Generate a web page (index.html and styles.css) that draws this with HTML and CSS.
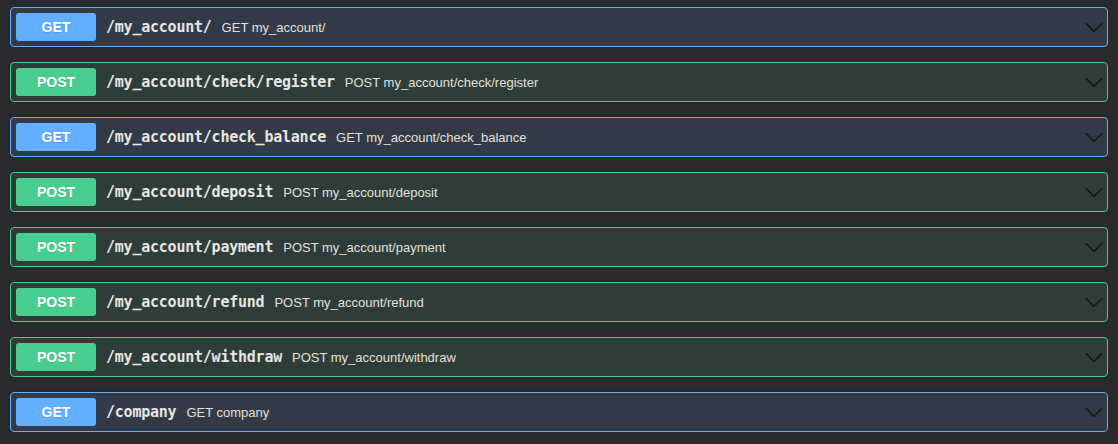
FILE: index.html
```html
<!DOCTYPE html>
<html>
<head>
<meta charset="utf-8">
<link rel="stylesheet" href="styles.css">
</head>
<body>
<div class="ops">
  <div class="opblock get">
    <span class="method">GET</span>
    <span class="path">/my_account/</span>
    <span class="desc">GET my_account/</span>
    <svg class="arrow" viewBox="0 0 20 20" width="20" height="20"><path d="M17.418 6.109c.272-.268.709-.268.979 0s.271.701 0 .969l-7.908 7.83c-.27.268-.707.268-.979 0l-7.908-7.830c-.27-.268-.27-.701 0-.969.271-.268.709-.268.979 0L10 13.25l7.418-7.141z"/></svg>
  </div>
  <div class="opblock post">
    <span class="method">POST</span>
    <span class="path">/my_account/check/register</span>
    <span class="desc">POST my_account/check/register</span>
    <svg class="arrow" viewBox="0 0 20 20" width="20" height="20"><path d="M17.418 6.109c.272-.268.709-.268.979 0s.271.701 0 .969l-7.908 7.83c-.27.268-.707.268-.979 0l-7.908-7.83c-.27-.268-.27-.701 0-.969.271-.268.709-.268.979 0L10 13.25l7.418-7.141z"/></svg>
  </div>
  <div class="opblock get">
    <span class="method">GET</span>
    <span class="path">/my_account/check_balance</span>
    <span class="desc">GET my_account/check_balance</span>
    <svg class="arrow" viewBox="0 0 20 20" width="20" height="20"><path d="M17.418 6.109c.272-.268.709-.268.979 0s.271.701 0 .969l-7.908 7.83c-.27.268-.707.268-.979 0l-7.908-7.83c-.27-.268-.27-.701 0-.969.271-.268.709-.268.979 0L10 13.25l7.418-7.141z"/></svg>
  </div>
  <div class="opblock post">
    <span class="method">POST</span>
    <span class="path">/my_account/deposit</span>
    <span class="desc">POST my_account/deposit</span>
    <svg class="arrow" viewBox="0 0 20 20" width="20" height="20"><path d="M17.418 6.109c.272-.268.709-.268.979 0s.271.701 0 .969l-7.908 7.83c-.27.268-.707.268-.979 0l-7.908-7.83c-.27-.268-.27-.701 0-.969.271-.268.709-.268.979 0L10 13.25l7.418-7.141z"/></svg>
  </div>
  <div class="opblock post">
    <span class="method">POST</span>
    <span class="path">/my_account/payment</span>
    <span class="desc">POST my_account/payment</span>
    <svg class="arrow" viewBox="0 0 20 20" width="20" height="20"><path d="M17.418 6.109c.272-.268.709-.268.979 0s.271.701 0 .969l-7.908 7.83c-.27.268-.707.268-.979 0l-7.908-7.83c-.27-.268-.27-.701 0-.969.271-.268.709-.268.979 0L10 13.25l7.418-7.141z"/></svg>
  </div>
  <div class="opblock post">
    <span class="method">POST</span>
    <span class="path">/my_account/refund</span>
    <span class="desc">POST my_account/refund</span>
    <svg class="arrow" viewBox="0 0 20 20" width="20" height="20"><path d="M17.418 6.109c.272-.268.709-.268.979 0s.271.701 0 .969l-7.908 7.83c-.27.268-.707.268-.979 0l-7.908-7.83c-.27-.268-.27-.701 0-.969.271-.268.709-.268.979 0L10 13.25l7.418-7.141z"/></svg>
  </div>
  <div class="opblock post">
    <span class="method">POST</span>
    <span class="path">/my_account/withdraw</span>
    <span class="desc">POST my_account/withdraw</span>
    <svg class="arrow" viewBox="0 0 20 20" width="20" height="20"><path d="M17.418 6.109c.272-.268.709-.268.979 0s.271.701 0 .969l-7.908 7.83c-.27.268-.707.268-.979 0l-7.908-7.83c-.27-.268-.27-.701 0-.969.271-.268.709-.268.979 0L10 13.25l7.418-7.141z"/></svg>
  </div>
  <div class="opblock get">
    <span class="method">GET</span>
    <span class="path">/company</span>
    <span class="desc">GET company</span>
    <svg class="arrow" viewBox="0 0 20 20" width="20" height="20"><path d="M17.418 6.109c.272-.268.709-.268.979 0s.271.701 0 .969l-7.908 7.83c-.27.268-.707.268-.979 0l-7.908-7.83c-.27-.268-.27-.701 0-.969.271-.268.709-.268.979 0L10 13.25l7.418-7.141z"/></svg>
  </div>
</div>
</body>
</html>
```

FILE: styles.css
```css
html, body {
  margin: 0;
  padding: 0;
  background: #292a2d;
}

.ops {
  display: flex;
  flex-direction: column;
  gap: 15px;
  padding: 7px 10px 0 10px;
}

.opblock {
  display: flex;
  align-items: center;
  height: 40px;
  box-sizing: border-box;
  padding: 0 3px 0 5px;
  border: 1px solid;
  border-radius: 4px;
  box-shadow: 0 0 3px rgba(0, 0, 0, 0.19);
}

.opblock.get {
  background: #333a47;
  border-color: #61affe;
}

.opblock.post {
  background: #2e3d39;
  border-color: #49cc90;
}

.method {
  flex: none;
  width: 80px;
  height: 28px;
  line-height: 28px;
  text-align: center;
  border-radius: 3px;
  color: #fff;
  font-family: "Liberation Sans", Arial, sans-serif;
  font-weight: 700;
  font-size: 14px;
  text-shadow: 0 1px 0 rgba(0, 0, 0, 0.1);
}

.get .method { background: #61affe; }
.post .method { background: #49cc90; }

.path {
  flex: none;
  padding: 0 10px;
  font-family: "DejaVu Sans Mono", monospace;
  font-weight: 700;
  font-size: 15px;
  letter-spacing: -0.23px;
  color: #e8e6e3;
}

.desc {
  flex: 1;
  font-family: "Liberation Sans", Arial, sans-serif;
  font-size: 13px;
  color: #e3e0db;
}

.arrow {
  flex: none;
  fill: #141414;
}
```
